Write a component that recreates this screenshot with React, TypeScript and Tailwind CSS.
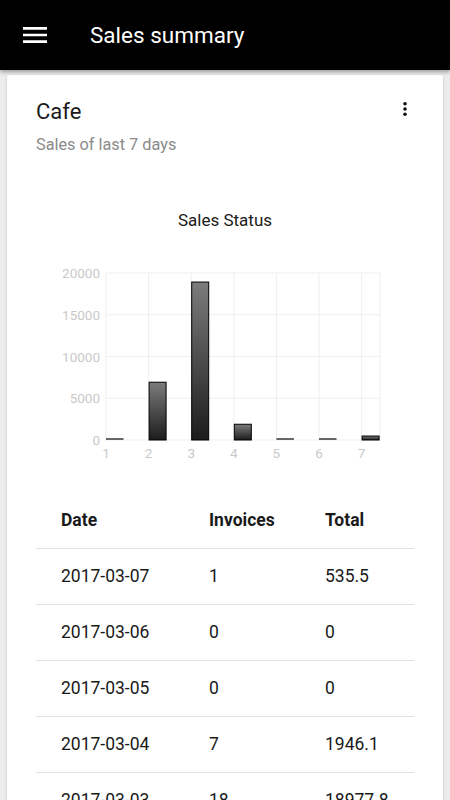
import React from "react";

const bars = [0, 6980, 18977.8, 1946.1, 0, 0, 535.5];
const rows = [
  ["2017-03-07", "1", "535.5"],
  ["2017-03-06", "0", "0"],
  ["2017-03-05", "0", "0"],
  ["2017-03-04", "7", "1946.1"],
  ["2017-03-03", "18", "18977.8"],
  ["2017-03-02", "6", "6980"],
  ["2017-03-01", "0", "0"],
];

function Chart() {
  const x0 = 70;
  const step = 42.6;
  const top = 43;
  const bottom = 210;
  const right = 344;
  const yTicks = [20000, 15000, 10000, 5000, 0];
  const scale = (bottom - top) / 20000;
  return (
    <svg width="378" height="240" viewBox="0 0 378 240" className="block">
      <defs>
        <linearGradient id="barGrad" x1="0" y1="0" x2="0" y2="1">
          <stop offset="0%" stopColor="#7c7c7c" />
          <stop offset="100%" stopColor="#1c1c1c" />
        </linearGradient>
      </defs>
      {yTicks.map((v) => {
        const y = bottom - v * scale;
        return (
          <g key={v}>
            <line x1={x0} x2={right} y1={y} y2={y} stroke="#efefef" strokeWidth="1" />
            <text
              x={64}
              y={y + 5}
              textAnchor="end"
              fontSize="13.5"
              fill="#c9c9c9"
              fontFamily="Roboto, sans-serif"
            >
              {v}
            </text>
          </g>
        );
      })}
      {bars.map((_, i) => {
        const x = x0 + i * step;
        return (
          <g key={i}>
            <line x1={x} x2={x} y1={top} y2={bottom} stroke="#efefef" strokeWidth="1" />
            <text
              x={x}
              y={bottom + 18}
              textAnchor="middle"
              fontSize="13.5"
              fill="#c9c9c9"
              fontFamily="Roboto, sans-serif"
            >
              {i + 1}
            </text>
          </g>
        );
      })}
      <line x1={right} x2={right} y1={top} y2={bottom} stroke="#efefef" strokeWidth="1" />
      {bars.map((v, i) => {
        const x = x0 + i * step;
        const h = v * scale;
        if (h < 2) {
          return <rect key={i} x={x} y={bottom - 2} width={17.5} height={2} fill="#666" />;
        }
        return (
          <rect
            key={i}
            x={x + 0.5}
            y={bottom - h + 0.5}
            width={17}
            height={h - 0.5}
            fill="url(#barGrad)"
            stroke="#000"
            strokeWidth="1"
          />
        );
      })}
    </svg>
  );
}

export default function App() {
  return (
    <div
      className="min-h-[800px] bg-[#ececec]"
      style={{ fontFamily: "Roboto, 'Noto Sans', sans-serif" }}
    >
      <header className="relative z-10 flex h-[70px] items-center bg-black shadow-[0_2px_4px_rgba(0,0,0,0.35)]">
        <svg width="32" height="32" viewBox="0 0 24 24" className="ml-[19px]" fill="#fff">
          <path d="M3 18h18v-2H3v2zm0-5h18v-2H3v2zm0-7v2h18V6H3z" />
        </svg>
        <h1 className="ml-[39px] text-[22.5px] leading-none text-white">Sales summary</h1>
      </header>
      <main className="px-[7px] pt-[5px]">
        <div className="rounded-[2px] bg-white px-[29px] pt-[24px] shadow-[0_1px_3px_rgba(0,0,0,0.18)]">
          <div className="flex items-start justify-between">
            <div className="text-[22px] leading-[26px] text-[#1a1a1a]">Cafe</div>
            <svg width="6" height="14" viewBox="0 0 6 14" className="mr-[6px] mt-[2.5px]" fill="#111">
              <circle cx="3" cy="1.8" r="1.8" />
              <circle cx="3" cy="7" r="1.8" />
              <circle cx="3" cy="12.2" r="1.8" />
            </svg>
          </div>
          <div className="mt-[10px] text-[16.3px] leading-[20px] text-[#8a8a8a]">Sales of last 7 days</div>
          <div className="mt-[55px] text-center text-[17px] leading-[20px] text-[#1a1a1a]">Sales Status</div>
          <Chart />
          <div className="mt-[23px]">
            <div className="grid h-[56px] grid-cols-[148px_116px_1fr] items-center border-b border-[#e2e2e2] pl-[25px] text-[17.5px] font-bold text-[#1a1a1a]">
              <div>Date</div>
              <div>Invoices</div>
              <div>Total</div>
            </div>
            {rows.map((r) => (
              <div
                key={r[0]}
                className="grid h-[56px] grid-cols-[148px_116px_1fr] items-center border-b border-[#e2e2e2] pl-[25px] text-[17.5px] text-[#1a1a1a]"
              >
                <div>{r[0]}</div>
                <div>{r[1]}</div>
                <div>{r[2]}</div>
              </div>
            ))}
          </div>
        </div>
      </main>
    </div>
  );
}
